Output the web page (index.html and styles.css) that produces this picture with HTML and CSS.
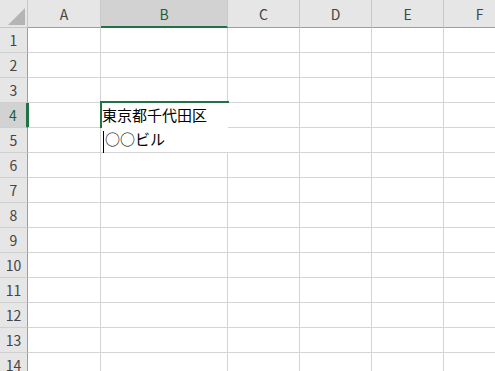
FILE: index.html
```html
<!DOCTYPE html>
<html lang="ja">
<head>
    <meta charset="UTF-8">
    <title>Sheet1</title>
    <link rel="stylesheet" href="styles.css">
</head>
<body>
    <div class="sheet">
        <div class="corner">
            <svg width="17" height="17" viewBox="0 0 17 17"><polygon points="17,0 17,17 0,17" fill="#b4b4b4"/></svg>
        </div>
        <div class="col-head">A</div>
        <div class="col-head active">B</div>
        <div class="col-head">C</div>
        <div class="col-head">D</div>
        <div class="col-head">E</div>
        <div class="col-head">F</div>

        <div class="row-head">1</div>
        <div class="cell"></div><div class="cell"></div><div class="cell"></div><div class="cell"></div><div class="cell"></div><div class="cell"></div>

        <div class="row-head">2</div>
        <div class="cell"></div><div class="cell"></div><div class="cell"></div><div class="cell"></div><div class="cell"></div><div class="cell"></div>

        <div class="row-head">3</div>
        <div class="cell"></div><div class="cell"></div><div class="cell"></div><div class="cell"></div><div class="cell"></div><div class="cell"></div>

        <div class="row-head active">4</div>
        <div class="cell"></div>
        <div class="cell editing">
            <div class="edit-line">東京都千代田区</div>
            <div class="edit-line"><span class="caret"></span>○○ビル</div>
        </div>
        <div class="cell"></div><div class="cell"></div><div class="cell"></div><div class="cell"></div>

        <div class="row-head">5</div>
        <div class="cell"></div><div class="cell"></div><div class="cell"></div><div class="cell"></div><div class="cell"></div>

        <div class="row-head">6</div>
        <div class="cell"></div><div class="cell"></div><div class="cell"></div><div class="cell"></div><div class="cell"></div><div class="cell"></div>

        <div class="row-head">7</div>
        <div class="cell"></div><div class="cell"></div><div class="cell"></div><div class="cell"></div><div class="cell"></div><div class="cell"></div>

        <div class="row-head">8</div>
        <div class="cell"></div><div class="cell"></div><div class="cell"></div><div class="cell"></div><div class="cell"></div><div class="cell"></div>

        <div class="row-head">9</div>
        <div class="cell"></div><div class="cell"></div><div class="cell"></div><div class="cell"></div><div class="cell"></div><div class="cell"></div>

        <div class="row-head">10</div>
        <div class="cell"></div><div class="cell"></div><div class="cell"></div><div class="cell"></div><div class="cell"></div><div class="cell"></div>

        <div class="row-head">11</div>
        <div class="cell"></div><div class="cell"></div><div class="cell"></div><div class="cell"></div><div class="cell"></div><div class="cell"></div>

        <div class="row-head">12</div>
        <div class="cell"></div><div class="cell"></div><div class="cell"></div><div class="cell"></div><div class="cell"></div><div class="cell"></div>

        <div class="row-head">13</div>
        <div class="cell"></div><div class="cell"></div><div class="cell"></div><div class="cell"></div><div class="cell"></div><div class="cell"></div>

        <div class="row-head">14</div>
        <div class="cell"></div><div class="cell"></div><div class="cell"></div><div class="cell"></div><div class="cell"></div><div class="cell"></div>
    </div>
</body>
</html>
```

FILE: styles.css
```css
body {
    margin: 0;
    background: #ffffff;
    font-family: "Noto Sans CJK JP", "Noto Sans", sans-serif;
    color: #444444;
    overflow: hidden;
}
.sheet {
    display: grid;
    grid-template-columns: 28px 73px 127px 72px 72px 72px 72px;
    grid-template-rows: 28px repeat(14, 25px);
    width: 516px;
}
.sheet > div {
    box-sizing: border-box;
}
.corner {
    background: #e6e6e6;
    border-right: 1px solid #c6c6c6;
    border-bottom: 1px solid #c6c6c6;
    display: flex;
    justify-content: flex-end;
    align-items: flex-end;
    padding: 0 2px 2px 0;
}
.corner svg {
    display: block;
}
.col-head {
    background: #e6e6e6;
    border-right: 1px solid #c9c9c9;
    border-bottom: 1px solid #9e9e9e;
    display: flex;
    align-items: center;
    justify-content: center;
    font-size: 14px;
    padding-top: 1px;
}
.col-head.active {
    background: #d2d2d2;
    border-bottom: 2px solid #217346;
    color: #1d5f3c;
}
.row-head {
    background: #e6e6e6;
    border-right: 1px solid #9e9e9e;
    border-bottom: 1px solid #cfcfcf;
    display: flex;
    align-items: center;
    justify-content: center;
    font-size: 14px;
}
.row-head.active {
    background: #d2d2d2;
    border-right: 2px solid #217346;
    box-shadow: 1px 0 0 #217346;
    color: #1d5f3c;
}
.cell {
    border-right: 1px solid #d4d4d4;
    border-bottom: 1px solid #d4d4d4;
}
.cell.editing {
    grid-row: span 2;
    border-right: none;
    background: #ffffff;
    position: relative;
    padding-left: 1px;
    font-size: 15px;
    color: #000000;
    white-space: nowrap;
}
.cell.editing::before {
    content: "";
    position: absolute;
    top: -2px;
    left: -1px;
    width: 129px;
    height: 2px;
    background: #217346;
}
.cell.editing::after {
    content: "";
    position: absolute;
    top: -2px;
    left: -1px;
    width: 2px;
    height: 27px;
    background: #217346;
}
.edit-line {
    height: 24px;
    line-height: 24px;
}
.caret {
    display: inline-block;
    width: 1px;
    height: 22px;
    margin: 0 1px 0 1px;
    background: #000000;
    vertical-align: -8px;
}
```
